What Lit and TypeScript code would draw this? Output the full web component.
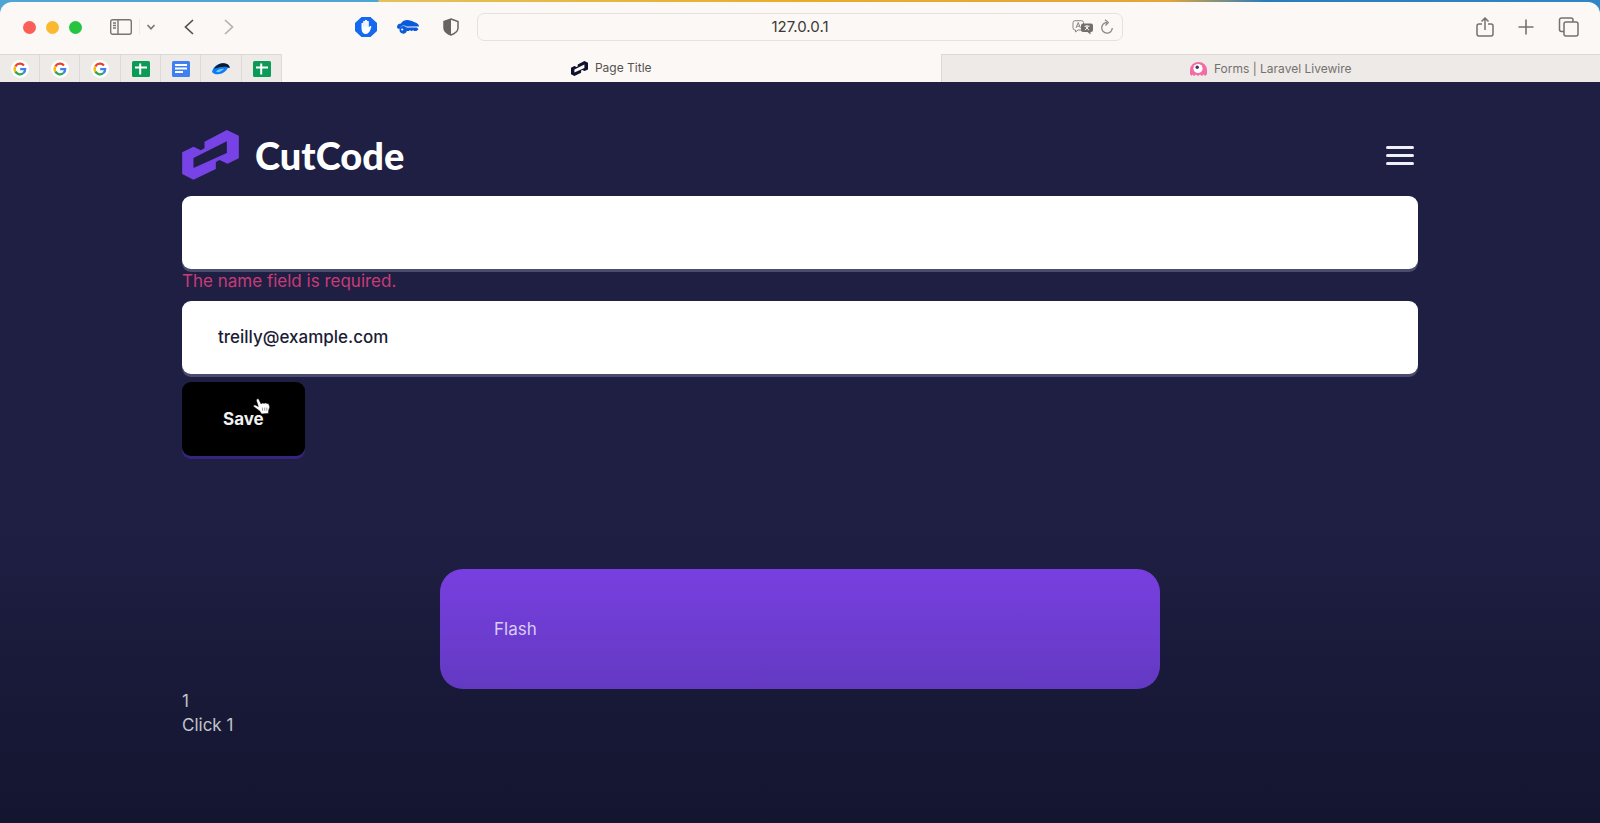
import { LitElement, html, css, svg } from "lit";
import { customElement, state } from "lit/decorators.js";

const LINK_SHAPE =
  "M36 128L70 111L92 122L103 116V96L170 61L206 78V146L172 162L148 151L137 157V178L70 210L36 193ZM70 145V175L170 130V95Z";

const google = svg`<svg width="18" height="18" viewBox="0 0 18 18" aria-hidden="true">
  <circle cx="9" cy="9" r="9" fill="#fff"/>
  <g fill="none" stroke-width="2.3">
    <path d="M4.4 6.3A5.3 5.3 0 0 1 12.9 5.4" stroke="#e8402f"/>
    <path d="M4.4 11.7A5.3 5.3 0 0 1 4.4 6.3" stroke="#f8b90a"/>
    <path d="M12.5 13A5.3 5.3 0 0 1 4.4 11.7" stroke="#2fa650"/>
    <path d="M9.2 9.1H14.2A5.3 5.3 0 0 1 12.5 13" stroke="#3f7fee"/>
  </g></svg>`;

const sheets = svg`<svg width="18" height="18" viewBox="0 0 18 18" aria-hidden="true">
  <rect y="1" width="18" height="16" rx="1.5" fill="#0c9b57"/>
  <path d="M3 7.6H15M8.2 3.5V14.5" stroke="#fff" stroke-width="2"/></svg>`;

const docs = svg`<svg width="18" height="18" viewBox="0 0 18 18" aria-hidden="true">
  <rect y="1" width="18" height="16" rx="1.5" fill="#4080f0"/>
  <path d="M3 5H15M3 8.500H15M3 12H11" stroke="#fff" stroke-width="1.8"/></svg>`;

const fin = svg`<svg width="18" height="18" viewBox="0 0 18 18" aria-hidden="true">
  <path d="M0 12C1 6 8 2 13 3.500C16 4 17.500 5.500 17.700 8C16 7.500 15.500 8.500 14.500 10C11 14.500 3 16 0 12Z" fill="#0b7cf2"/>
  <path d="M2 8.500C5 4 10 2.500 13 3.500C16 4 17.500 5.500 17.700 8C13 5.500 8 7 2 8.500Z" fill="#0b1a2e"/>
  <path d="M4 11.500C6 9.500 9 8.500 12 9C9 12 6 13 4 11.500Z" fill="#7cc2ff"/></svg>`;

@customElement("browser-bar")
export class BrowserBar extends LitElement {
  static styles = css`
    :host {
      display: block;
      background: linear-gradient(90deg, #4ea5d3 0 378px, #e2c25c 379px, #e8ad2c 50%, #e2a63a 73%, #2c7cbc 79%, #2f86c6);
      padding-top: 2px;
      font-family: Inter, "Liberation Sans", sans-serif;
      color: #4a4846;
    }
    .window { background: #fcf8f5; border-radius: 12px 12px 0 0; overflow: hidden; }
    .toolbar { display: flex; align-items: center; height: 52px; box-sizing: border-box; padding-bottom: 2px; }
    .side { flex: 1 1 0; display: flex; align-items: center; }
    .lights { display: flex; gap: 10px; padding: 0 28px 0 23px; }
    .light { width: 13px; height: 13px; border-radius: 50%; }
    .red { background: #f95f57; }
    .amber { background: #fbb92f; }
    .green { background: #27c441; }
    button { all: unset; display: flex; cursor: pointer; }
    .chevron { border-left: 1px solid #efebe8; padding: 4px 0 4px 6px; margin-left: 7px; }
    .history { display: flex; gap: 30px; padding-left: 28px; }
    .extensions { display: flex; align-items: center; gap: 20px; margin-left: auto; padding-right: 14px; }
    .address {
      width: 40.4%; height: 28px; box-sizing: border-box; display: grid;
      grid-template-columns: 60px 1fr 60px; align-items: center;
      border: 1px solid #e6e2df; border-radius: 7px;
    }
    .address input {
      grid-column: 2; min-width: 0; border: 0; background: none; outline: 0; text-align: center;
      font: 15px/20px Inter, "Liberation Sans", sans-serif; color: #3b3937;
    }
    .tools { display: flex; align-items: center; gap: 6px; padding-left: 10px; }
    .actions { justify-content: flex-end; gap: 22px; }
    .actions button:last-child { margin-right: 20px; }
    .tabs { display: flex; height: 28px; font-size: 12px; line-height: 16px; }
    .pin, .tab {
      display: flex; align-items: center; justify-content: center; box-sizing: border-box;
      color: #75716e; text-decoration: none;
    }
    .pin { width: 40px; background: #eeeae7; border-top: 1px solid #dcd8d5; border-right: 1px solid #dedad7; }
    .pin:nth-child(3n) { width: 41px; }
    .tab { flex: 1; gap: 7px; }
    .current { color: #55524f; }
    .idle { background: #edeae7; border-top: 1px solid #dcd8d5; border-left: 1px solid #dcd8d5; }
  `;

  render() {
    const pins: [string, unknown][] = [
      ["Google", google], ["Google", google], ["Google", google],
      ["Sheets", sheets], ["Docs", docs], ["Fin", fin], ["Sheets", sheets],
    ];
    return html`<div class="window">
      <div class="toolbar">
        <div class="side">
          <div class="lights">
            <span class="light red"></span><span class="light amber"></span><span class="light green"></span>
          </div>
          <button aria-label="Sidebar"><svg width="22" height="16" viewBox="0 0 22 16" fill="none" stroke="#777472" stroke-width="1.4">
            <rect x=".7" y=".7" width="20.600" height="14.600" rx="2"/><path d="M8 1V15M3 4H6M3 6.500H6M3 9H6"/></svg></button>
          <button class="chevron" aria-label="Tab groups"><svg width="10" height="8" viewBox="0 0 10 8" fill="none" stroke="#777472" stroke-width="1.6"><path d="M1.500 2L5 5.800L8.500 2"/></svg></button>
          <div class="history">
            <button aria-label="Back"><svg width="10" height="16" viewBox="0 0 10 16" fill="none" stroke="#53504e" stroke-width="1.7"><path d="M9 1L1.500 8L9 15"/></svg></button>
            <button aria-label="Forward"><svg width="10" height="16" viewBox="0 0 10 16" fill="none" stroke="#b5b1ae" stroke-width="1.7"><path d="M1 1L8.500 8L1 15"/></svg></button>
          </div>
          <div class="extensions">
            <button aria-label="Ad blocker"><svg width="22" height="20" viewBox="0 0 22 20">
              <path d="M6.500 0H15.500L22 6V14L15.500 20H6.500L0 14V6Z" fill="#1469f0"/>
              <path d="M6.500 11V6.200Q7.300 5.200 8.200 6.200V4.200Q9 3.200 10 4.200V3.300Q11 2.400 12 3.300V4.200Q13 3.400 13.800 4.400V10.500L15 9Q16.600 8.500 16.300 10C15.500 13 14 17 11 17Q6.500 17 6.500 11Z" fill="#fff"/>
              <path d="M8.300 6V10M10.100 4.500V9.500M12 4.500V9.500" stroke="#b8d2fb" stroke-width=".5"/></svg></button>
            <button aria-label="Passwords"><svg width="22" height="14" viewBox="0 0 22 14">
              <path d="M0 7C0 4.500 2 3.500 4 3.500C5 1 8 0 10 0C13 0 15 1 17 2C20 2.500 22 4.500 22 6.500H9.500A4.400 4.400 0 0 0 2.500 9C1 9 0 8 0 7Z" fill="#0a5bdc"/>
              <path d="M6.300 6A3.800 3.800 0 1 0 9.900 11H12L13 10L14 11H15L16 10L17 11H19.500L21.500 9.200L19.800 7.600H9.700A3.800 3.800 0 0 0 6.300 6Z" fill="#0a5bdc"/>
              <circle cx="5.200" cy="9.500" r="1.100" fill="#fcf8f5"/></svg></button>
            <button aria-label="Privacy report"><svg width="24" height="18" viewBox="-4 0 24 18">
              <path d="M8 1L15 3.500V10C15 13.500 11.500 15.800 8 17C4.500 15.800 1 13.500 1 10V3.500Z" fill="none" stroke="#676461" stroke-width="1.500"/>
              <path d="M8 1L1 3.500V10C1 13.500 4.500 15.800 8 17Z" fill="#676461"/></svg></button>
          </div>
        </div>
        <div class="address">
          <input aria-label="Address" value="127.0.0.1" />
          <div class="tools">
            <button aria-label="Translate"><svg width="22" height="15" viewBox="0 0 22 15">
              <path d="M3 .7H9.500A2 2 0 0 1 11.500 2.700V8A2 2 0 0 1 9.500 10H6L3.500 12V10H3A2 2 0 0 1 1 8V2.700A2 2 0 0 1 3 .7Z" fill="none" stroke="#8b8784"/>
              <path d="M4 8L6.200 2.500L8.400 8M4.800 6.200H7.600" fill="none" stroke="#8b8784"/>
              <path d="M11 3.500H19A2 2 0 0 1 21 5.500V10A2 2 0 0 1 19 12H18.500V14.500L15.500 12H11A2 2 0 0 1 9 10V5.500A2 2 0 0 1 11 3.500Z" fill="#716e6b"/>
              <path d="M12.500 6.200H17.500M15 5V6.200M13 10.200L16.500 6.500M13.500 6.500L17 10.200" stroke="#fcf8f5" fill="none"/></svg></button>
            <button aria-label="Reload"><svg width="14" height="16" viewBox="0 0 14 16" fill="none" stroke="#8b8784" stroke-width="1.300"><path d="M7 3.500A5.300 5.300 0 1 0 12.300 9M5 .8L8.300 3.600L5.500 6.500"/></svg></button>
          </div>
        </div>
        <div class="side actions">
          <button aria-label="Share"><svg width="18" height="20" viewBox="0 0 18 20" fill="none" stroke="#75716e" stroke-width="1.500"><path d="M6 7H3A2 2 0 0 0 1 9V17A2 2 0 0 0 3 19H15A2 2 0 0 0 17 17V9A2 2 0 0 0 15 7H12M9 13V1.500M5.500 4.500L9 1L12.500 4.500"/></svg></button>
          <button aria-label="New tab"><svg width="20" height="20" viewBox="0 0 20 20" stroke="#75716e" stroke-width="1.600"><path d="M10 2.500V17.500M2.500 10H17.500"/></svg></button>
          <button aria-label="Show tabs"><svg width="22" height="20" viewBox="0 0 22 20" fill="none" stroke="#75716e" stroke-width="1.500"><rect x="6" y="5" width="14" height="14" rx="2"/><path d="M6 14.500H3.500A2 2 0 0 1 1.500 12.500V3A2 2 0 0 1 3.500 1H13A2 2 0 0 1 15 3V5"/></svg></button>
        </div>
      </div>
      <nav class="tabs">
        ${pins.map(([name, icon]) => html`<a class="pin" href="#" aria-label=${name}>${icon}</a>`)}
        <a class="tab current" href="#"><svg width="17" height="15" viewBox="36 61 170 150"><path d=${LINK_SHAPE} fill="#10112f" fill-rule="evenodd"/></svg>Page Title</a>
        <a class="tab idle" href="#"><svg width="17" height="14" viewBox="0 0 17 14">
          <path d="M0 12V8A8.500 8 0 0 1 17 8V12L15.500 14L13.500 12.500L12 14L10 12.500L8 14L6 12.500L4 14L2.500 12.500L1.500 14Z" fill="#f36ca4"/>
          <circle cx="8" cy="6.500" r="4.600" fill="#fff"/><circle cx="7.200" cy="5.300" r="1.700" fill="#35346b"/></svg>Forms | Laravel Livewire</a>
      </nav>
    </div>`;
  }
}

@customElement("app-root")
export class AppRoot extends LitElement {
  static styles = css`
    :host {
      display: flex; flex-direction: column; min-height: 100vh;
      background: #1e1f43; font: 17px/24px Inter, "Liberation Sans", sans-serif; color: #c3c3ca;
    }
    .page { flex: 1; padding: 48px 182px; background: linear-gradient(#1e1f43 60%, #14152f); }
    .header { display: flex; align-items: center; justify-content: space-between; height: 50px; margin-bottom: 16px; }
    .brand { display: flex; align-items: center; gap: 16px; color: #fff; text-decoration: none; font: 900 38px/48px Lato, sans-serif; }
    button { all: unset; cursor: pointer; }
    .menu { display: grid; gap: 5px; margin-right: 4px; }
    .bar { width: 28px; height: 3px; border-radius: 2px; background: #f0eef6; }
    .form { display: grid; justify-items: start; gap: 8px; }
    .field { width: 100%; }
    .input {
      display: block; width: 100%; height: 73px; box-sizing: border-box; padding: 0 36px 2px; border: 0; outline: 0;
      border-radius: 9px; background: #fff; box-shadow: 0 3px #4b4c6d;
      font: 500 17px/24px Inter, "Liberation Sans", sans-serif; color: #1b1c35;
    }
    .error { margin: 0; line-height: 24px; color: #c93b76; }
    .submit { position: relative; }
    .save {
      height: 74px; padding: 0 41px; border-radius: 9px; background: #000; box-shadow: 0 3px #38247c;
      font-weight: 700; font-size: 17px; color: #f1f1f1;
    }
    .pointer { position: absolute; left: 71px; top: 16px; }
    .flash {
      max-width: 720px; box-sizing: border-box; margin: 113px auto 0; padding: 48px 54px; border-radius: 23px;
      background: linear-gradient(#783fe0, #6339c2); color: #d9cdf1;
    }
    .count { display: block; }
  `;

  @state() private clicks = 1;

  render() {
    return html`
      <browser-bar></browser-bar>
      <main class="page">
        <header class="header">
          <a class="brand" href="#">
            <svg width="57" height="50" viewBox="36 61 170 150" aria-hidden="true"><path d=${LINK_SHAPE} fill="#7843e6" fill-rule="evenodd"/></svg>
            CutCode
          </a>
          <button class="menu" aria-label="Menu"><span class="bar"></span><span class="bar"></span><span class="bar"></span></button>
        </header>
        <form class="form" @submit=${(e: Event) => e.preventDefault()}>
          <div class="field">
            <input class="input" type="text" aria-label="Name" aria-describedby="name-error" />
            <p class="error" id="name-error">The name field is required.</p>
          </div>
          <input class="input" type="email" aria-label="Email" value="treilly@example.com" />
          <div class="submit">
            <button class="save" type="submit">Save</button>
            <svg class="pointer" width="17" height="17" viewBox="0 0 16 16" aria-hidden="true">
              <path d="M3.500 1Q5 0 5.600 1.500L7.500 5.500L9 4.800L10.500 5L12 4.600L13.200 5.200L14.800 5.500L15.800 8.500L14.800 11.500L14.500 14.500L8 15L6.500 12.500L.5 8Q0 6.300 2 6.500L5 8L3.200 2.500Z" fill="#fff" stroke="#000" stroke-width=".5"/>
              <path d="M9 9V12M11 9V12M13 9V12" stroke="#666" stroke-width=".6"/></svg>
          </div>
        </form>
        <section class="flash" role="status">Flash</section>
        <output class="count">${this.clicks}</output>
        <button @click=${() => this.clicks++}>Click ${this.clicks}</button>
      </main>
    `;
  }
}
